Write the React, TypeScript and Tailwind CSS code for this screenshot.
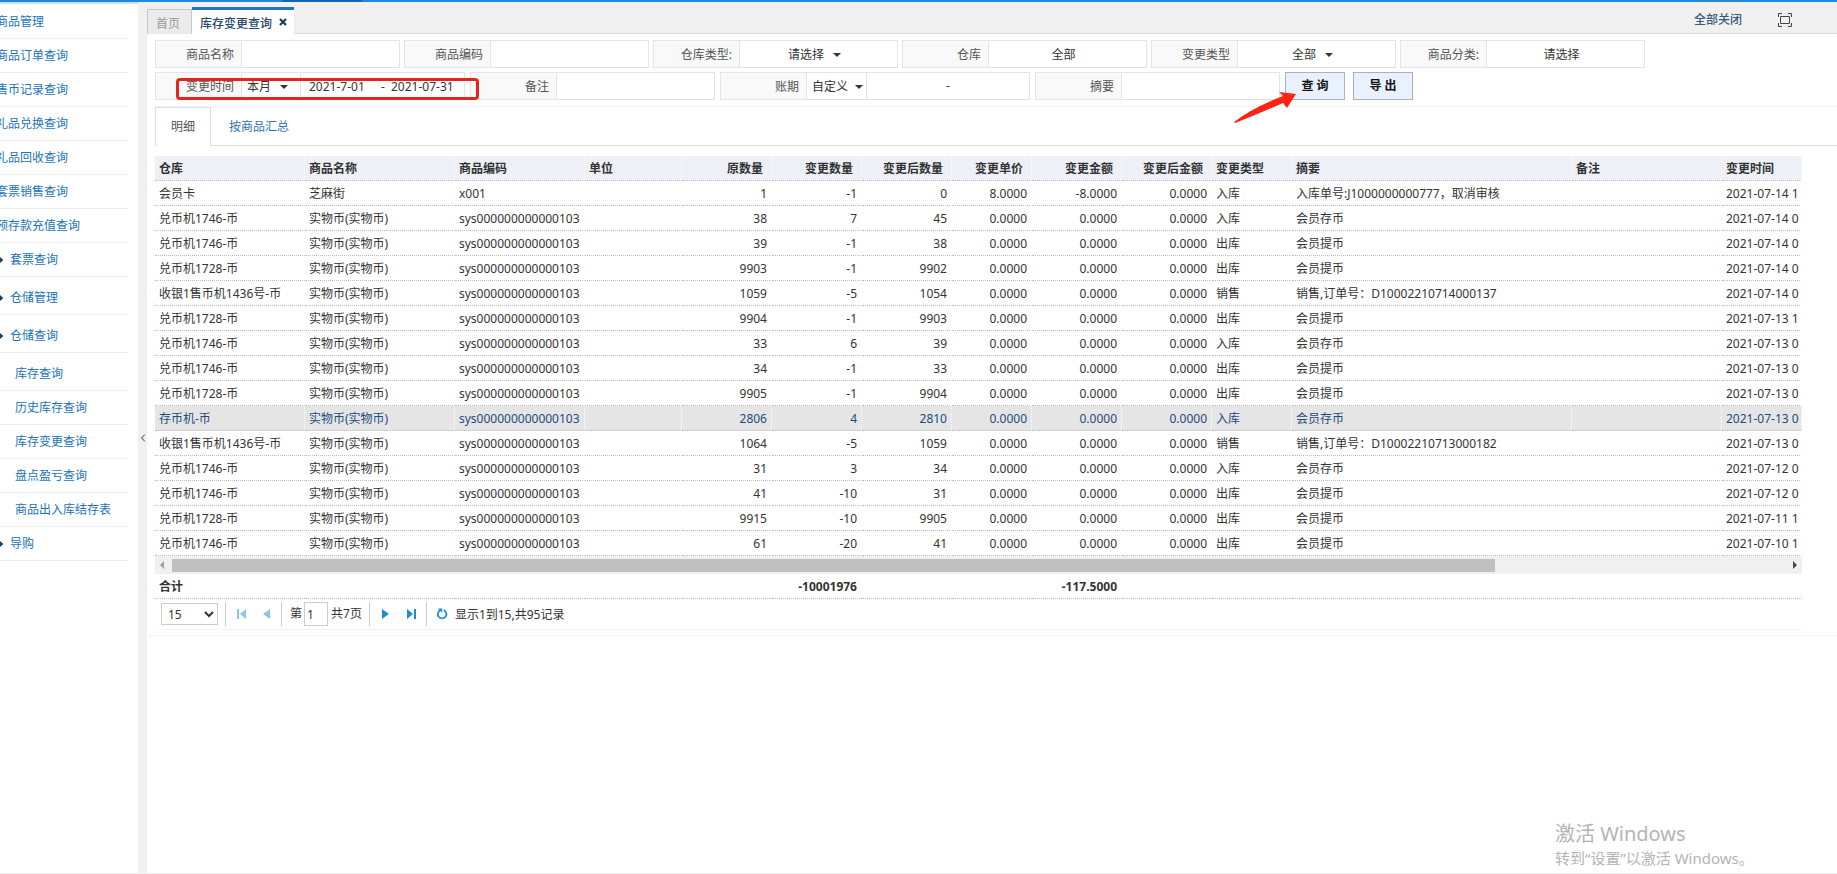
import type { ReactNode } from "react";
import { ChevronLeft } from "lucide-react";

type NavItem = {
  label: string;
  level: "leaf" | "group" | "child";
  tall?: boolean;
};

const navItems: NavItem[] = [
  { label: "商品管理", level: "leaf" },
  { label: "商品订单查询", level: "leaf" },
  { label: "售币记录查询", level: "leaf" },
  { label: "礼品兑换查询", level: "leaf" },
  { label: "礼品回收查询", level: "leaf" },
  { label: "套票销售查询", level: "leaf" },
  { label: "预存款充值查询", level: "leaf" },
  { label: "套票查询", level: "group" },
  { label: "仓储管理", level: "group", tall: true },
  { label: "仓储查询", level: "group", tall: true },
  { label: "库存查询", level: "child", tall: true },
  { label: "历史库存查询", level: "child" },
  { label: "库存变更查询", level: "child" },
  { label: "盘点盈亏查询", level: "child" },
  { label: "商品出入库结存表", level: "child" },
  { label: "导购", level: "group" },
];

const levelPadding = {
  leaf: "pl-0",
  group: "pl-[14px]",
  child: "pl-[19px]",
};

const columns = [
  { title: "仓库", width: 150 },
  { title: "商品名称", width: 150 },
  { title: "商品编码", width: 130 },
  { title: "单位", width: 97 },
  { title: "原数量", width: 90, right: true },
  { title: "变更数量", width: 90, right: true },
  { title: "变更后数量", width: 90, right: true },
  { title: "变更单价", width: 80, right: true },
  { title: "变更金额", width: 90, right: true },
  { title: "变更后金额", width: 90, right: true },
  { title: "变更类型", width: 80 },
  { title: "摘要", width: 280 },
  { title: "备注", width: 150 },
  { title: "变更时间" },
];

const COIN = "实物币(实物币)";
const SYS = "sys000000000000103";
const Z = "0.0000";

const rows = [
  ["会员卡", "芝麻街", "x001", "", "1", "-1", "0", "8.0000", "-8.0000", Z, "入库", "入库单号:J1000000000777，取消审核", "", "2021-07-14 1"],
  ["兑币机1746-币", COIN, SYS, "", "38", "7", "45", Z, Z, Z, "入库", "会员存币", "", "2021-07-14 0"],
  ["兑币机1746-币", COIN, SYS, "", "39", "-1", "38", Z, Z, Z, "出库", "会员提币", "", "2021-07-14 0"],
  ["兑币机1728-币", COIN, SYS, "", "9903", "-1", "9902", Z, Z, Z, "出库", "会员提币", "", "2021-07-14 0"],
  ["收银1售币机1436号-币", COIN, SYS, "", "1059", "-5", "1054", Z, Z, Z, "销售", "销售,订单号：D10002210714000137", "", "2021-07-14 0"],
  ["兑币机1728-币", COIN, SYS, "", "9904", "-1", "9903", Z, Z, Z, "出库", "会员提币", "", "2021-07-13 1"],
  ["兑币机1746-币", COIN, SYS, "", "33", "6", "39", Z, Z, Z, "入库", "会员存币", "", "2021-07-13 0"],
  ["兑币机1746-币", COIN, SYS, "", "34", "-1", "33", Z, Z, Z, "出库", "会员提币", "", "2021-07-13 0"],
  ["兑币机1728-币", COIN, SYS, "", "9905", "-1", "9904", Z, Z, Z, "出库", "会员提币", "", "2021-07-13 0"],
  ["存币机-币", COIN, SYS, "", "2806", "4", "2810", Z, Z, Z, "入库", "会员存币", "", "2021-07-13 0"],
  ["收银1售币机1436号-币", COIN, SYS, "", "1064", "-5", "1059", Z, Z, Z, "销售", "销售,订单号：D10002210713000182", "", "2021-07-13 0"],
  ["兑币机1746-币", COIN, SYS, "", "31", "3", "34", Z, Z, Z, "入库", "会员存币", "", "2021-07-12 0"],
  ["兑币机1746-币", COIN, SYS, "", "41", "-10", "31", Z, Z, Z, "出库", "会员提币", "", "2021-07-12 0"],
  ["兑币机1728-币", COIN, SYS, "", "9915", "-10", "9905", Z, Z, Z, "出库", "会员提币", "", "2021-07-11 1"],
  ["兑币机1746-币", COIN, SYS, "", "61", "-20", "41", Z, Z, Z, "出库", "会员提币", "", "2021-07-10 1"],
];

const selectedRow = 9;

const totals = ["合计", "", "", "", "", "-10001976", "", "", "-117.5000", "", "", "", "", ""];

function Caret() {
  return (
    <svg className="pointer-events-none h-1 w-2 shrink-0" viewBox="0 0 8 4" aria-hidden="true">
      <path d="M0 0h8L4 4z" fill="#333" />
    </svg>
  );
}

function Field({ id, label, className = "w-[245px]", children }: {
  id: string;
  label: string;
  className?: string;
  children: ReactNode;
}) {
  return (
    <div className={`relative flex h-7 border border-[#e4e4e4] bg-white ${className}`}>
      <label
        htmlFor={id}
        className="flex w-[86px] shrink-0 items-center justify-end border-r border-[#e4e4e4] bg-[#f9f9f9] pr-[7px] pt-0.5 text-[#555]"
      >
        {label}
      </label>
      {children}
    </div>
  );
}

function TextField({ id, label, value = "" }: { id: string; label: string; value?: string }) {
  return (
    <Field id={id} label={label}>
      <input id={id} type="text" defaultValue={value} className="min-w-0 flex-1 pr-2 pt-0.5 text-center outline-none" />
    </Field>
  );
}

function SelectField({ id, label, options }: { id: string; label: string; options: string[] }) {
  return (
    <Field id={id} label={label}>
      <div className="flex flex-1 items-center justify-center gap-2 pr-2 pt-0.5">
        <select id={id} className="appearance-none outline-none">
          {options.map((option) => (
            <option key={option}>{option}</option>
          ))}
        </select>
        <Caret />
      </div>
    </Field>
  );
}

function Columns() {
  return (
    <colgroup>
      {columns.map((column) => (
        <col key={column.title} style={{ width: column.width }} />
      ))}
    </colgroup>
  );
}

function Sidebar() {
  return (
    <nav className="w-[138px] shrink-0 overflow-hidden border-t-2 border-[#c3e1f8] bg-white pt-px">
      <ul className="-ml-1 mr-[10px]">
        {navItems.map((item) => (
          <li key={item.label} className="border-b border-[#efefef]">
            <a
              href="#"
              className={`relative flex items-center whitespace-nowrap text-[#1a73b8] ${levelPadding[item.level]} ${
                item.tall ? "h-[37px] pt-1" : "h-[33px]"
              }`}
            >
              {item.level === "group" && (
                <svg className="absolute left-1 h-2 w-1" viewBox="0 0 4 8" aria-hidden="true">
                  <path d="M0 1l3.4 3L0 7z" fill="#1d3c57" />
                </svg>
              )}
              {item.label}
            </a>
          </li>
        ))}
      </ul>
    </nav>
  );
}

function PageTabs() {
  return (
    <header className="flex h-8 items-end justify-between border-b border-[#d8d8d8] bg-[#f0f0f0]">
      <div className="-mb-px flex items-end">
        <a href="#" className="flex h-[25px] w-[45px] items-center border border-b-0 border-[#c6c6c6] bg-[#ebebeb] pl-2 pt-1 text-[#999]">
          首页
        </a>
        <div className="flex h-[27px] w-[102px] items-center gap-[7px] border-t-[3px] border-[#1b77b8] bg-white pl-2 pt-1 font-medium text-[#27496d]">
          <a href="#">库存变更查询</a>
          <button type="button" aria-label="关闭" className="pb-1">
            <svg className="h-2 w-2" viewBox="0 0 8 8" aria-hidden="true">
              <path d="M1 1l6 6M7 1L1 7" stroke="#1d3f63" strokeWidth="2.2" />
            </svg>
          </button>
        </div>
      </div>
      <div className="flex h-full items-center gap-9 pr-[45px] pt-[5px]">
        <button type="button" className="font-medium text-[#3c5878]">全部关闭</button>
        <button type="button" aria-label="全屏">
          <svg className="h-[14px] w-[14px]" viewBox="0 0 14 14" fill="none" stroke="#444" aria-hidden="true">
            <path d="M.5 4V.5H4M10 .5h3.5V4M13.5 10v3.5H10M4 13.5H.5V10" />
            <path d="M2.5 3.5h9v7h-9z" />
          </svg>
        </button>
      </div>
    </header>
  );
}

function QueryForm() {
  return (
    <form className="space-y-1 border-b border-[#f4f4f4] pb-[6px] pt-[6px] text-[#333]" onSubmit={(e) => e.preventDefault()}>
      <div className="flex flex-wrap gap-1">
        <TextField id="goodsName" label="商品名称" />
        <TextField id="goodsCode" label="商品编码" />
        <SelectField id="storeType" label="仓库类型:" options={["请选择"]} />
        <TextField id="store" label="仓库" value="全部" />
        <SelectField id="changeType" label="变更类型" options={["全部", "入库", "出库", "销售"]} />
        <TextField id="goodsClass" label="商品分类:" value="请选择" />
      </div>

      <div className="flex flex-wrap gap-x-[5px] gap-y-1">
        <Field id="changeTime" label="变更时间" className="z-10 w-[310px]">
          <div className="flex w-[59px] items-center gap-2 border-r border-[#e4e4e4] pl-[5px] pt-0.5">
            <select id="changeTime" className="appearance-none outline-none">
              <option>本月</option>
              <option>本周</option>
            </select>
            <Caret />
          </div>
          <div className="flex flex-1 items-center pl-2 pt-0.5">
            <input type="text" aria-label="开始日期" defaultValue="2021-7-01" className="w-[72px] outline-none" />
            <span className="w-[10px]">-</span>
            <input type="text" aria-label="结束日期" defaultValue="2021-07-31" className="w-[70px] outline-none" />
          </div>
          <div className="pointer-events-none absolute left-5 top-[5px] h-[22px] w-[303px] rounded border-[3px] border-[#e8241a]" />
        </Field>
        <TextField id="remark" label="备注" />
        <Field id="period" label="账期" className="w-[310px]">
          <div className="flex w-[60px] items-center gap-[6px] border-r border-[#e4e4e4] pl-[5px] pt-0.5">
            <select id="period" className="appearance-none outline-none">
              <option>自定义</option>
            </select>
            <Caret />
          </div>
          <input type="text" aria-label="账期开始" className="min-w-0 flex-1 px-1 outline-none" />
          <span className="self-center">-</span>
          <input type="text" aria-label="账期结束" className="min-w-0 flex-1 px-1 outline-none" />
        </Field>
        <TextField id="summary" label="摘要" />
        <div className="relative flex gap-2">
          <button type="submit" className="h-7 w-[60px] border border-[#a8b1bd] bg-[#e8f1fd] font-bold text-[#111]">
            查 询
          </button>
          <button type="button" className="h-7 w-[60px] border border-[#a8b1bd] bg-[#e8f1fd] font-bold text-[#111]">
            导 出
          </button>
          <svg className="pointer-events-none absolute -left-[51px] top-[19px] h-8 w-[63px]" viewBox="0 0 63 32" aria-hidden="true">
            <path d="M0 31Q18 17 49 5L45 1 62 3 53 17 49 12Q22 24 1 32z" fill="#fb2414" />
          </svg>
        </div>
      </div>
    </form>
  );
}

function StockTable() {
  return (
    <div className="overflow-hidden">
      <table className="w-full min-w-[1647px] table-fixed border-separate border-spacing-0 whitespace-nowrap text-[#333]">
        <Columns />
        <thead>
          <tr className="bg-[#edf0f6]">
            {columns.map((column) => (
              <th
                key={column.title}
                className={`h-[25px] border-b border-r border-dotted border-b-[#bbb] border-r-white pl-1 pt-0.5 ${
                  column.right ? "pr-2 text-right" : "text-left"
                }`}
              >
                {column.title}
              </th>
            ))}
          </tr>
        </thead>
        <tbody>
          {rows.map((row, i) => (
            <tr key={i} className={i === selectedRow ? "bg-[#e5e5e5] text-[#1f4a7d]" : ""}>
              {row.map((cell, j) => (
                <td
                  key={j}
                  className={`h-[25px] border-b border-r border-dotted border-b-[#bbb] border-r-white pl-1 pt-0.5 ${
                    columns[j].right ? "pr-1 text-right" : ""
                  }`}
                >
                  {cell}
                </td>
              ))}
            </tr>
          ))}
        </tbody>
      </table>

      <div className="flex h-[18px] items-center bg-[#f0f0f0] px-[5px]">
        <svg className="mr-2 h-2 w-1" viewBox="0 0 4 8" aria-hidden="true">
          <path d="M4 0v8L0 4z" fill="#a0a0a0" />
        </svg>
        <div className="flex-1">
          <div className="h-[13px] w-[82%] bg-[#c0c0c0]" />
        </div>
        <svg className="ml-2 h-2 w-1" viewBox="0 0 4 8" aria-hidden="true">
          <path d="M0 0v8l4-4z" fill="#444" />
        </svg>
      </div>

      <table className="w-full min-w-[1647px] table-fixed border-separate border-spacing-0 whitespace-nowrap text-[#333]">
        <Columns />
        <tbody>
          <tr className="font-bold">
            {totals.map((cell, j) => (
              <td
                key={j}
                className={`h-[25px] border-b border-dotted border-[#bbb] pl-1 pt-0.5 ${columns[j].right ? "pr-[5px] text-right" : ""}`}
              >
                {cell}
              </td>
            ))}
          </tr>
        </tbody>
      </table>
    </div>
  );
}

function Divider() {
  return <span className="h-6 w-px bg-[#ccc]" />;
}

function Pager() {
  return (
    <div className="flex h-[31px] items-center border-b border-[#f4f4f4] pl-[6px] text-[#333]">
      <select aria-label="每页条数" className="mr-[7px] h-[22px] w-[57px] border border-[#ccc] bg-white pl-[2px]">
        <option>15</option>
        <option>30</option>
        <option>50</option>
      </select>
      <Divider />
      <button type="button" aria-label="首页" className="ml-[11px]">
        <svg className="h-[10px] w-[9px]" viewBox="0 0 9 10" fill="#8cc4ea" aria-hidden="true">
          <path d="M0 0h2v10H0zM9 0v10L3 5z" />
        </svg>
      </button>
      <button type="button" aria-label="上一页" className="ml-[17px] mr-[11px]">
        <svg className="h-[10px] w-[7px]" viewBox="0 0 7 10" fill="#8cc4ea" aria-hidden="true">
          <path d="M7 0v10L0 5z" />
        </svg>
      </button>
      <Divider />
      <label htmlFor="pageNo" className="ml-2 mr-[2px]">第</label>
      <input id="pageNo" type="text" defaultValue="1" className="mr-[3px] h-6 w-6 border border-[#ccc] pl-[2px] outline-none" />
      <span className="mr-[7px]">共7页</span>
      <Divider />
      <button type="button" aria-label="下一页" className="ml-3">
        <svg className="h-[10px] w-[7px]" viewBox="0 0 7 10" fill="#1c8cd8" aria-hidden="true">
          <path d="M0 0v10l7-5z" />
        </svg>
      </button>
      <button type="button" aria-label="末页" className="ml-[18px] mr-[10px]">
        <svg className="h-[10px] w-[9px]" viewBox="0 0 9 10" fill="#1c8cd8" aria-hidden="true">
          <path d="M0 0v10l6-5zM7 0h2v10H7z" />
        </svg>
      </button>
      <Divider />
      <button type="button" aria-label="刷新" className="ml-[9px] mr-[7px]">
        <svg className="h-3 w-3" viewBox="0 0 12 12" aria-hidden="true">
          <path d="M7.6 2.1a4.3 4.3 0 1 1-3.4.2" fill="none" stroke="#1c8cd8" strokeWidth="1.8" />
          <path d="M1.8.6h4.4v4.2z" fill="#1c8cd8" />
        </svg>
      </button>
      <span className="pt-0.5">显示1到15,共95记录</span>
    </div>
  );
}

export default function App() {
  return (
    <div className="relative flex min-h-screen flex-col overflow-hidden border-b border-[#eee] bg-white font-['Noto_Sans','Noto_Sans_CJK_SC',sans-serif] text-xs leading-4">
      <div className="h-[2px] bg-[#2187dc]">
        <div className="ml-[282px] h-full w-20 bg-[#0b67b8]" />
      </div>

      <div className="flex flex-1">
        <Sidebar />
        <button type="button" aria-label="收起菜单" className="flex w-[9px] shrink-0 items-center justify-center bg-[#f0f0f0]">
          <ChevronLeft className="h-3 w-3 shrink-0 text-[#333]" />
        </button>

        <main className="min-w-0 flex-1">
          <PageTabs />
          <div className="pl-2">
            <QueryForm />
            <div className="flex h-[39px] border-b border-[#ddd]">
              <a href="#" className="-mb-px flex w-14 items-center justify-center border border-b-0 border-[#ddd] bg-white text-[#555]">
                明细
              </a>
              <a href="#" className="flex items-center px-[18px] pt-0.5 text-[#3372ad]">
                按商品汇总
              </a>
            </div>
            <div className="pr-[35px] pt-[10px]">
              <StockTable />
              <Pager />
            </div>
          </div>
          <div className="mt-[5px] border-t border-[#f4f4f4]" />
        </main>
      </div>

      <div className="pointer-events-none absolute bottom-[3px] right-[84px] w-[198px] whitespace-nowrap text-[#b4b4b4]">
        <p className="text-xl leading-6">激活 Windows</p>
        <p className="text-[15px] leading-6">转到“设置”以激活 Windows。</p>
      </div>
    </div>
  );
}
